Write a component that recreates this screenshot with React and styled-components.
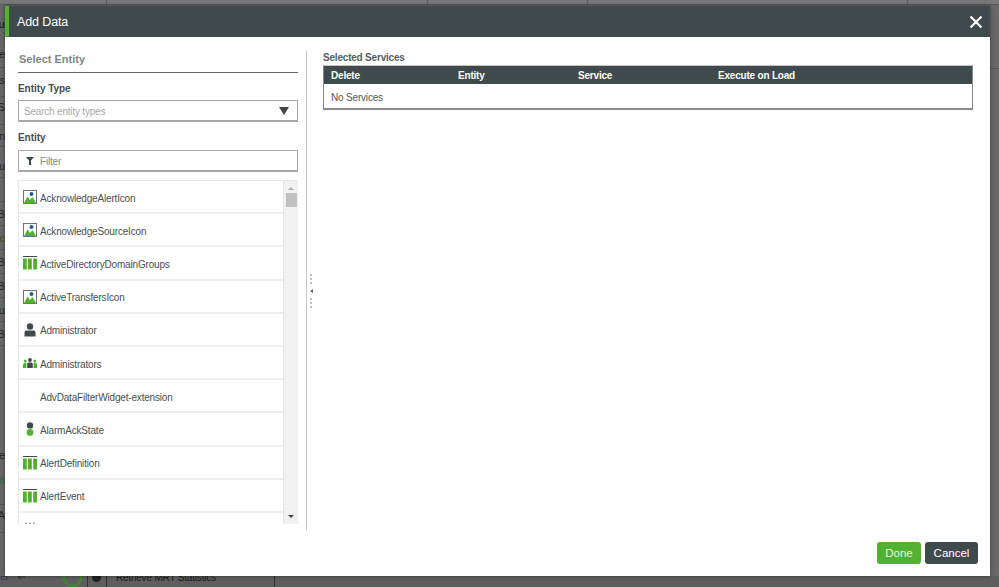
import React from 'react';
import styled, { createGlobalStyle } from 'styled-components';

const GlobalStyle = createGlobalStyle`
  html, body { margin: 0; padding: 0; height: 100%; overflow: hidden; }
  body { font-family: "Liberation Sans", Arial, sans-serif; background: #666; }
`;

const Page = styled.div`
  position: relative;
  width: 999px;
  height: 587px;
  overflow: hidden;
  background: #686868;
  display: flex;
  flex-direction: column;
`;

const TopStrip = styled.div`
  height: 5px;
  flex: none;
  box-sizing: border-box;
  display: grid;
  grid-template-columns: 106px 321px 160px 320px 1fr;
  background: #787878;
  border-bottom: 1px solid #5a5a5a;
  & > div + div { border-left: 1px solid #5c5c5c; }
`;

const Middle = styled.div`
  flex: 1;
  min-height: 0;
  display: flex;
  justify-content: space-between;
`;

const BackRows = styled.div`
  width: 5px;
  overflow: hidden;
  display: flex;
  flex-direction: column;
`;

const SideRows = styled.div`
  width: 9px;
  overflow: hidden;
  display: flex;
  flex-direction: column;
`;

const BackRow = styled.div`
  height: ${(p) => p.$h}px;
  flex: none;
  box-sizing: border-box;
  padding: ${(p) => p.$pt || 0}px 0 ${(p) => p.$pb || 0}px;
  display: flex;
  justify-content: flex-end;
  align-items: center;
  font-size: 11px;
  font-weight: ${(p) => (p.$bold ? 700 : 400)};
  color: ${(p) => p.$color || '#262626'};
  border-bottom: ${(p) => (p.$line ? '1px solid #575757' : 'none')};
  white-space: nowrap;
`;

const BackBottom = styled.div`
  height: 11px;
  flex: none;
  display: flex;
  align-items: flex-start;
  background: #5e5e5e;
  overflow: hidden;
  font-size: 10px;
  letter-spacing: -0.18px;
  color: #1d1d1d;
`;

const BackLink = styled.div`
  width: 63px;
  flex: none;
  margin-top: -5px;
  line-height: 12px;
  font-size: 10px;
  color: #33335c;
  text-align: left;
  display: flex;
  gap: 10px;
  align-items: center;
`;

const Ring = styled.div`
  width: 19px;
  height: 19px;
  flex: none;
  box-sizing: border-box;
  border-radius: 50%;
  border: 2px solid #3f8a2b;
  margin-top: -8px;
`;

const BackCell = styled.div`
  height: 11px;
  border-left: 1px solid #333;
  margin-left: ${(p) => p.$ml}px;
  padding-left: ${(p) => p.$pl}px;
  width: ${(p) => p.$w}px;
  flex: none;
  box-sizing: border-box;
  border-right: ${(p) => (p.$end ? '1px solid #333' : 'none')};
  white-space: nowrap;
  line-height: 3px;
`;

const Globe = styled.div`
  width: 9px;
  height: 9px;
  margin-top: -3px;
  border-radius: 50%;
  background: #222;
`;

const Overlay = styled.div`
  position: absolute;
  left: 5px;
  top: 6px;
  width: 985px;
  height: 570px;
  background: #fff;
  display: flex;
  flex-direction: column;
  box-shadow: 0 0 4px rgba(0, 0, 0, 0.45);
`;

const Header = styled.div`
  height: 31px;
  flex: none;
  background: #3f4a4c;
  border-left: 4px solid #52b033;
  display: flex;
  align-items: center;
  justify-content: space-between;
  padding: 0 5px 0 8px;
  color: #fff;
  font-size: 12.5px;
  letter-spacing: -0.12px;
`;

const CloseButton = styled.button`
  width: 18px;
  height: 18px;
  padding: 0;
  border: 0;
  background: none;
  display: flex;
  cursor: pointer;
`;

const Body = styled.div`
  height: 479px;
  flex: none;
  margin-top: 14px;
  display: flex;
  padding-left: 13px;
`;

const LeftPane = styled.div`
  width: 280px;
  flex: none;
  display: flex;
  flex-direction: column;
`;

const SectionTitle = styled.div`
  height: 22px;
  flex: none;
  box-sizing: border-box;
  border-bottom: 1px solid #666;
  padding: 2px 0 0 1px;
  font-size: 11px;
  font-weight: 700;
  line-height: 13px;
  color: #7b8789;
`;

const FieldLabel = styled.div`
  height: ${(p) => p.$h}px;
  flex: none;
  font-size: 10px;
  letter-spacing: -0.06px;
  font-weight: 700;
  color: #444c4e;
  display: flex;
  align-items: center;
  padding-top: ${(p) => p.$pt}px;
  box-sizing: border-box;
`;

const InputBox = styled.div`
  height: 22px;
  flex: none;
  box-sizing: border-box;
  border: 1px solid #a9a9a9;
  border-bottom-width: 2px;
  display: flex;
  align-items: center;
  font-size: 10px;
  letter-spacing: -0.2px;
  padding: 0 8px 0 ${(p) => (p.$filter ? '7px' : '5px')};
  gap: 6px;
`;

const InputText = styled.span`
  flex: 1;
  padding-top: 2px;
  color: ${(p) => p.$color || '#a8a8a8'};
`;

const Caret = styled.div`
  width: 0;
  height: 0;
  border-left: 5.5px solid transparent;
  border-right: 5.5px solid transparent;
  border-top: 8px solid #444;
`;

const ListWrap = styled.div`
  height: 344px;
  flex: none;
  margin-top: 8px;
  display: flex;
  overflow: hidden;
  border-top: 1px solid #e8e8e8;
  box-sizing: border-box;
`;

const EntityList = styled.div`
  flex: 1;
  overflow: hidden;
  border-left: 1px solid #e6e6e6;
  border-right: 1px solid #e6e6e6;
`;

const EntityRow = styled.div`
  height: 33.2px;
  box-sizing: border-box;
  border-bottom: 2px solid #efefef;
  display: flex;
  align-items: center;
  padding: 1px 0 0 4px;
  gap: 3px;
  font-size: 10px;
  letter-spacing: -0.18px;
  color: #4a5052;
  white-space: nowrap;
`;

const EntityName = styled.span`
  padding-top: 2px;
`;

const IconSlot = styled.span`
  width: 14px;
  height: 14px;
  flex: none;
  display: flex;
`;

const FilterSlot = styled.span`
  width: 8px;
  height: 8px;
  flex: none;
  display: flex;
`;

const ScrollBar = styled.div`
  width: 14px;
  flex: none;
  background: #f1f1f1;
  display: flex;
  flex-direction: column;
  align-items: center;
`;

const ArrowUp = styled.div`
  margin-top: 6px;
  width: 0;
  height: 0;
  border-left: 3px solid transparent;
  border-right: 3px solid transparent;
  border-bottom: 3px solid #b0b0b0;
`;

const Thumb = styled.div`
  width: 11px;
  height: 14px;
  margin-top: 3px;
  background: #c1c1c1;
`;

const ArrowDown = styled.div`
  margin-top: auto;
  margin-bottom: 6px;
  width: 0;
  height: 0;
  border-left: 3px solid transparent;
  border-right: 3px solid transparent;
  border-top: 3px solid #444;
`;

const Splitter = styled.div`
  width: 17px;
  flex: none;
  margin-left: 8px;
  border-left: 1px solid #c8c8c8;
  display: flex;
  flex-direction: column;
  align-items: center;
  justify-content: center;
  gap: 2px;
  padding-right: 8px;
  box-sizing: border-box;
`;

const Dot = styled.div`
  width: 2px;
  height: 2px;
  background: #bdbdbd;
`;

const HandleArrow = styled.div`
  width: 0;
  height: 0;
  margin: 3px 0;
  border-top: 2px solid transparent;
  border-bottom: 2px solid transparent;
  border-right: 3px solid #666;
`;

const RightPane = styled.div`
  width: 650px;
  flex: none;
  display: flex;
  flex-direction: column;
`;

const TableTitle = styled.div`
  height: 14px;
  flex: none;
  font-size: 10px;
  letter-spacing: -0.2px;
  font-weight: 700;
  color: #555e60;
  line-height: 13px;
`;

const ServicesTable = styled.div`
  height: 45px;
  flex: none;
  box-sizing: border-box;
  border: 1px solid #8a8a8a;
  border-top-color: #c4c4c4;
  border-bottom-width: 2px;
  display: flex;
  flex-direction: column;
`;

const TableHead = styled.div`
  height: 18px;
  flex: none;
  background: #3f4a4c;
  display: grid;
  grid-template-columns: 127px 120px 140px 1fr;
  padding-left: 7px;
  align-items: center;
  font-size: 10px;
  letter-spacing: -0.2px;
  font-weight: 700;
  color: #fff;
`;

const TableEmpty = styled.div`
  flex: 1;
  display: flex;
  align-items: center;
  padding: 2px 0 0 7px;
  font-size: 10px;
  letter-spacing: -0.18px;
  color: #555;
`;

const Footer = styled.div`
  flex: 1;
  display: flex;
  justify-content: flex-end;
  align-items: flex-start;
  gap: 4px;
  padding: 12px 12px 0 0;
`;

const Button = styled.button`
  height: 22px;
  width: ${(p) => (p.$primary ? 44 : 53)}px;
  padding: 0;
  border: 0;
  border-radius: 3px;
  background: ${(p) => (p.$primary ? '#52b033' : '#3f4a4c')};
  color: ${(p) => (p.$primary ? '#e6f5df' : '#fff')};
  font-family: inherit;
  font-size: 11.5px;
  cursor: pointer;
`;

const ImageIcon = () => (
  <svg width="14" height="14" viewBox="0 0 14 14">
    <rect x="0.5" y="0.5" width="13" height="13" fill="#fff" stroke="#6d7577" />
    <circle cx="8.5" cy="4" r="2" fill="#1f5f96" />
    <path d="M1 13 L4.5 6.5 L7 10 L9.5 7 L13 13 Z" fill="#52b033" />
  </svg>
);

const TableIcon = () => (
  <svg width="14" height="14" viewBox="0 0 14 14">
    <rect x="0" y="0" width="14" height="1" fill="#3f4a4c" />
    <rect x="0" y="2.5" width="3.8" height="11" fill="#52b033" />
    <rect x="5" y="2.5" width="3.8" height="11" fill="#52b033" />
    <rect x="10.2" y="2.5" width="3.8" height="11" fill="#52b033" />
  </svg>
);

const UserIcon = () => (
  <svg width="14" height="14" viewBox="0 0 14 14">
    <circle cx="7" cy="3.5" r="3.2" fill="#3f4a4c" />
    <path d="M1.5 13.5 V9.5 Q1.5 7.5 3.5 7.5 H10.5 Q12.5 7.5 12.5 9.5 V13.5 Z" fill="#3f4a4c" />
  </svg>
);

const GroupIcon = () => (
  <svg width="14" height="14" viewBox="0 0 14 14">
    <circle cx="2.2" cy="5" r="1.5" fill="#52b033" />
    <path d="M0 12 V8.5 Q0 7 1.5 7 H3.4 V12 Z" fill="#52b033" />
    <circle cx="11.8" cy="5" r="1.5" fill="#52b033" />
    <path d="M14 12 V8.5 Q14 7 12.5 7 H10.6 V12 Z" fill="#52b033" />
    <circle cx="7" cy="4" r="1.9" fill="#3f4a4c" />
    <path d="M4.2 12 V8 Q4.2 6.4 5.6 6.4 H8.4 Q9.8 6.4 9.8 8 V12 Z" fill="#3f4a4c" />
  </svg>
);

const ClusterIcon = () => (
  <svg width="14" height="14" viewBox="0 0 14 14">
    <circle cx="3" cy="1.4" r="1" fill="#9aa3a5" />
    <circle cx="7" cy="1.4" r="1" fill="#9aa3a5" />
    <circle cx="11" cy="1.4" r="1" fill="#9aa3a5" />
    <path d="M1 13 V4 H13 V13 Z" fill="#52b033" />
  </svg>
);

const StateIcon = () => (
  <svg width="14" height="14" viewBox="0 0 14 14">
    <circle cx="7" cy="3.4" r="3.2" fill="#3f4a4c" />
    <circle cx="7" cy="10.4" r="3.4" fill="#52b033" />
  </svg>
);

const FilterIcon = () => (
  <svg width="8" height="8" viewBox="0 0 8 8">
    <path d="M0 0 H8 L5 3.6 V8 H3 V3.6 Z" fill="#3f4a4c" />
  </svg>
);

const CloseIcon = () => (
  <svg width="18" height="18" viewBox="0 0 18 18">
    <path d="M3.5 3.5 L14.5 14.5 M14.5 3.5 L3.5 14.5" stroke="#fff" strokeWidth="2.2" />
  </svg>
);

const LinkArrow = () => (
  <svg width="8" height="6" viewBox="0 0 8 6">
    <path d="M8 3 H2 M4 0.5 L1 3 L4 5.5" stroke="#333" fill="none" />
  </svg>
);

const icons = {
  image: <ImageIcon />,
  table: <TableIcon />,
  user: <UserIcon />,
  group: <GroupIcon />,
  state: <StateIcon />,
  cluster: <ClusterIcon />,
};

const entities = [
  ['AcknowledgeAlertIcon', 'image'],
  ['AcknowledgeSourceIcon', 'image'],
  ['ActiveDirectoryDomainGroups', 'table'],
  ['ActiveTransfersIcon', 'image'],
  ['Administrator', 'user'],
  ['Administrators', 'group'],
  ['AdvDataFilterWidget-extension', null],
  ['AlarmAckState', 'state'],
  ['AlertDefinition', 'table'],
  ['AlertEvent', 'table'],
  ['AllUsers', 'cluster'],
];

const backRows = [
  { h: 8, t: '' },
  { h: 22, t: 'u', bold: true },
  { h: 33, t: 'e', line: true, pt: 5 },
  { h: 29, t: 's', line: true, pb: 4 },
  { h: 28, t: 'S', line: true, pb: 8 },
  { h: 22, t: 'n', line: true },
  { h: 31, t: 'u', line: true, pt: 7 },
  { h: 24, t: '', line: true },
  { h: 24, t: 'B', line: true },
  { h: 24, t: 'c', line: true, color: '#4d4a22' },
  { h: 24, t: 'B', line: true },
  { h: 24, t: 'B', line: true },
  { h: 24, t: 'Su', line: true },
  { h: 24, t: 'B', line: true },
  { h: 97, t: '' },
  { h: 24, t: 'e' },
  { h: 26, t: 'on', color: '#2f6a20' },
  { h: 12, t: '', line: true },
  { h: 28, t: 'A', line: true, pb: 8 },
];

const App = () => (
  <Page>
    <GlobalStyle />
    <TopStrip>
      <div />
      <div />
      <div />
      <div />
      <div />
    </TopStrip>
    <Middle>
      <BackRows>
        {backRows.map((row, i) => (
          <BackRow key={i} $h={row.h} $bold={row.bold} $line={row.line} $color={row.color} $pt={row.pt} $pb={row.pb}>
            {row.t}
          </BackRow>
        ))}
      </BackRows>
      <SideRows>
        <BackRow $h={64} $line />
      </SideRows>
    </Middle>
    <BackBottom>
      <BackLink>
        <span>el</span>
        <LinkArrow />
      </BackLink>
      <Ring />
      <BackCell $ml={5} $pl={4} $w={19}>
        <Globe />
      </BackCell>
      <BackCell $ml={0} $pl={9} $w={169} $end>
        Retrieve MRT Statistics
      </BackCell>
    </BackBottom>

    <Overlay>
      <Header>
        <span>Add Data</span>
        <CloseButton aria-label="Close">
          <CloseIcon />
        </CloseButton>
      </Header>
      <Body>
        <LeftPane>
          <SectionTitle>Select Entity</SectionTitle>
          <FieldLabel $h={27} $pt={4}>Entity Type</FieldLabel>
          <InputBox>
            <InputText>Search entity types</InputText>
            <Caret />
          </InputBox>
          <FieldLabel $h={28} $pt={2}>Entity</FieldLabel>
          <InputBox $filter>
            <FilterSlot>
              <FilterIcon />
            </FilterSlot>
            <InputText $color="#8a8a8a">Filter</InputText>
          </InputBox>
          <ListWrap>
            <EntityList>
              {entities.map(([name, icon]) => (
                <EntityRow key={name}>
                  <IconSlot>{icon && icons[icon]}</IconSlot>
                  <EntityName>{name}</EntityName>
                </EntityRow>
              ))}
            </EntityList>
            <ScrollBar>
              <ArrowUp />
              <Thumb />
              <ArrowDown />
            </ScrollBar>
          </ListWrap>
        </LeftPane>
        <Splitter>
          <Dot />
          <Dot />
          <Dot />
          <HandleArrow />
          <Dot />
          <Dot />
          <Dot />
        </Splitter>
        <RightPane>
          <TableTitle>Selected Services</TableTitle>
          <ServicesTable>
            <TableHead>
              <span>Delete</span>
              <span>Entity</span>
              <span>Service</span>
              <span>Execute on Load</span>
            </TableHead>
            <TableEmpty>No Services</TableEmpty>
          </ServicesTable>
        </RightPane>
      </Body>
      <Footer>
        <Button $primary>Done</Button>
        <Button>Cancel</Button>
      </Footer>
    </Overlay>
  </Page>
);

export default App;
